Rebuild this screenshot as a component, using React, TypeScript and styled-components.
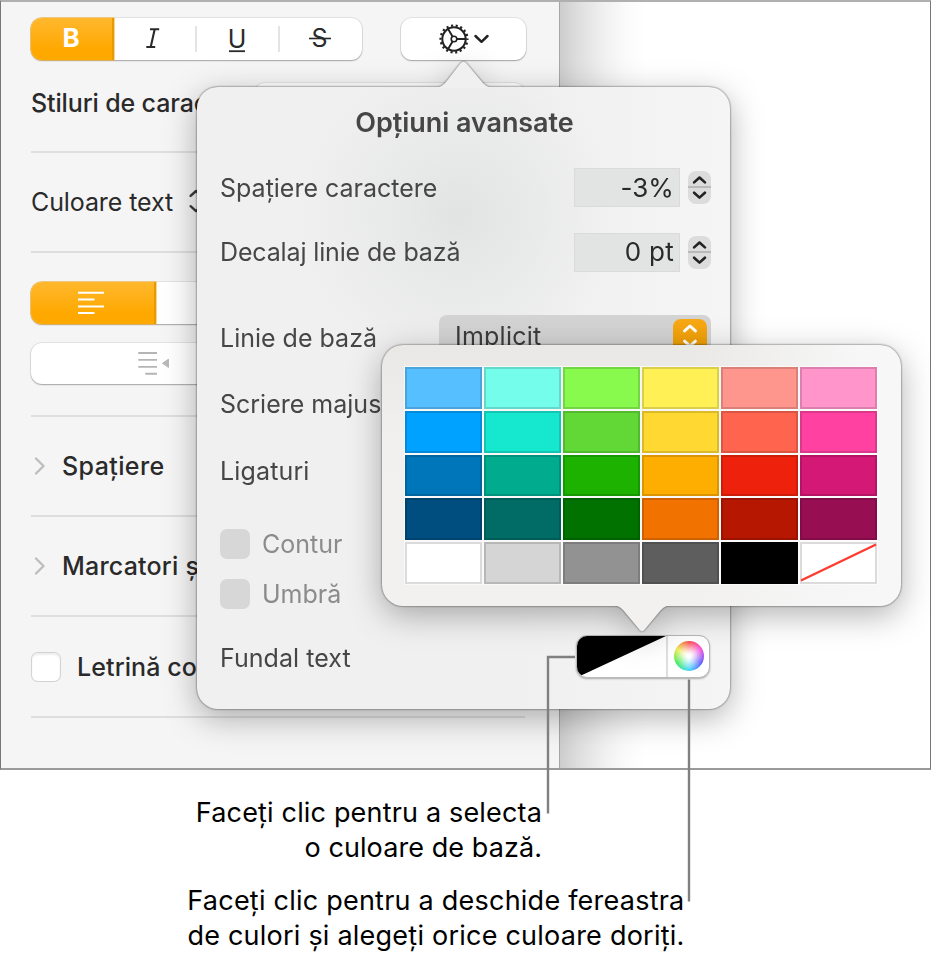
import React from 'react';
import styled, { createGlobalStyle, css } from 'styled-components';

const GlobalStyle = createGlobalStyle`
  * { box-sizing: border-box; }
  html, body { margin: 0; padding: 0; background: #fff; }
  body { width: 934px; height: 958px; overflow: hidden; font-family: Inter, "Noto Sans", sans-serif; }
  svg { display: block; flex: none; }
`;

const Page = styled.div`
  position: relative;
  width: 934px;
  height: 958px;
  background: #fff;
`;

const Window = styled.div`
  position: relative;
  display: flex;
  width: 931px;
  height: 770px;
  overflow: hidden;
  border: 1px solid #77777a;
  border-top: 2px solid #b0b0b0;
  border-bottom: 2px solid #9a9a9a;
`;

const Sidebar = styled.aside`
  display: flex;
  flex-direction: column;
  width: 558px;
  padding: 0 34px 0 30px;
  background: #f5f5f5;
`;

const DocumentArea = styled.main`
  flex: 1;
  border-left: 1px solid #a6a6a6;
  background: linear-gradient(90deg, #cdcdcd 0, #dedede 18px, #efefef 42px, #fafafa 64px, #fff 85px);
`;

const Section = styled.section<{ $height: number }>`
  display: flex;
  align-items: center;
  flex: none;
  height: ${p => p.$height}px;
  border-bottom: 2px solid #dedede;
`;

const StyleSection = styled.section`
  flex: none;
  height: 151px;
  padding-top: 16px;
  border-bottom: 2px solid #dedede;
`;

const AlignSection = styled(Section)`
  flex-direction: column;
  align-items: stretch;
  padding-top: 29px;
  gap: 19px;
`;

const ButtonRow = styled.div`
  display: flex;
  justify-content: space-between;
  height: 42px;
  margin-right: -1px;
`;

const raised = css`
  background: #fff;
  border-radius: 11px;
  box-shadow: 0 0 0 1px rgba(0, 0, 0, 0.07), 0 1px 1.5px rgba(0, 0, 0, 0.28);
`;

const Segmented = styled.div<{ $width: number }>`
  ${raised}
  display: flex;
  flex: none;
  align-items: center;
  width: ${p => p.$width}px;
  height: 42px;
`;

const Segment = styled.div<{ $width: number; $active?: boolean; $divided?: boolean }>`
  display: flex;
  align-items: center;
  justify-content: center;
  width: ${p => p.$width}px;
  height: ${p => (p.$active ? '100%' : '26px')};
  padding: 0 3px 2px 0;
  border-left: ${p => (p.$divided ? '2px solid #e4e4e4' : '0')};
  ${p => p.$active && css`
    border-radius: 11px 0 0 11px;
    border-right: 2px solid #e69a04;
    background: linear-gradient(#ffb82e, #ffa800 75%);
    box-shadow: 0 0 0 0.5px #fba91a;
  `}
`;

const RoundButton = styled.div`
  ${raised}
  display: flex;
  align-items: center;
  justify-content: center;
  gap: 5px;
  width: 125px;
  padding-left: 0;
`;

const IndentControl = styled.div`
  ${raised}
  flex: none;
  height: 41px;
  padding: 6.5px 0 0 107px;
`;

const CharacterStyle = styled.div`
  display: flex;
  justify-content: space-between;
  align-items: center;
  margin-top: 22px;
  height: 42px;
`;

const StyleMenu = styled.div`
  ${raised}
  width: 272px;
  height: 40px;
`;

type LabelProps = { $spacing?: number; $weight?: number; $size?: number; $color?: string };
const Label = styled.span<LabelProps>`
  font-size: ${p => p.$size ?? 25}px;
  font-weight: ${p => p.$weight ?? 400};
  letter-spacing: ${p => p.$spacing ?? 0}px;
  line-height: 32px;
  color: ${p => p.$color ?? '#2a2a2a'};
  white-space: nowrap;
`;

const Disclosure = styled.div`
  display: flex;
  width: 31px;
  padding-left: 3px;
`;

const SidebarCheckbox = styled.span`
  width: 28px;
  height: 28px;
  margin: 0 17px 0 1px;
  border-radius: 6px;
  background: #fff;
  box-shadow: 0 0 0 1px #d2d2d2, inset 0 2px 2px #eee;
`;

const popoverBase = css`
  position: absolute;
  border-radius: 21px;
  filter: drop-shadow(0 0 0.8px rgba(0, 0, 0, 0.65)) drop-shadow(0 9px 16px rgba(0, 0, 0, 0.3));
`;

const OptionsPopover = styled.div`
  ${popoverBase}
  left: 197px;
  top: 87px;
  width: 533px;
  height: 622px;
  padding: 0 19px 0 23px;
  background:
    radial-gradient(circle at 262px 128px, rgba(225, 226, 226, 0.95) 0, rgba(229, 230, 230, 0.75) 60px, rgba(240, 240, 240, 0) 160px),
    linear-gradient(90deg, #f0f0f0 60%, #f5f5f5);
`;

const PalettePopover = styled.div`
  ${popoverBase}
  left: 382px;
  top: 345px;
  width: 519px;
  height: 261px;
  padding: 22px 23px;
  background: linear-gradient(90deg, transparent 60%, #f7f7f7 92%), linear-gradient(#e9e8e5, #f1f0ef 35%, #f2f1f0);
`;

const ArrowUp = styled.svg`
  position: absolute;
  left: 237px;
  top: -26px;
`;

const ArrowDown = styled.svg`
  position: absolute;
  left: 230px;
  bottom: -26px;
`;

const Title = styled.h2`
  display: flex;
  justify-content: center;
  align-items: center;
  height: 72px;
  margin: 0 2px -4px 0;
  font: inherit;
`;

const OptionRow = styled.div<{ $height: number; $top?: number }>`
  display: flex;
  align-items: center;
  justify-content: space-between;
  height: ${p => p.$height}px;
  margin-top: ${p => p.$top ?? 0}px;
`;

const CheckRow = styled.div`
  display: flex;
  align-items: center;
  gap: 12px;
  height: 50px;
`;

const CheckGroup = styled.div`
  margin-top: 15px;
`;

const DisabledBox = styled.span`
  width: 30px;
  height: 30px;
  border-radius: 7px;
  background: #d7d7d7;
`;

const NumberControl = styled.div`
  display: flex;
  align-items: center;
  gap: 8px;
`;

const NumberField = styled.div`
  display: flex;
  align-items: center;
  justify-content: flex-end;
  width: 106px;
  height: 39px;
  padding-right: 5px;
  border: 1px solid #dadada;
  background: #e2e3e3;
`;

const StepperBox = styled.div`
  width: 23px;
  height: 33px;
  border-radius: 8px;
  background: linear-gradient(#dcdcdc 15px, #b9b9b9 15px, #b9b9b9 17px, #dcdcdc 17px);
`;

const SelectBox = styled.div`
  display: flex;
  align-items: center;
  justify-content: space-between;
  width: 272px;
  height: 42px;
  margin-bottom: 4px;
  padding: 0 4px 0 16px;
  border-radius: 8px;
  background: #d3d3d3;
`;

const SelectKnob = styled.span`
  display: flex;
  align-items: center;
  justify-content: center;
  width: 34px;
  height: 34px;
  border-radius: 8px;
  background: linear-gradient(#f9a916, #eb9b00);
`;

const ColorWell = styled.div`
  display: flex;
  overflow: hidden;
  width: 134px;
  height: 43px;
  margin: 0 1px 4px 0;
  border: 1px solid #b9b9b9;
  border-radius: 11px;
  background: #fff;
  box-shadow: 0 1px 2px rgba(0, 0, 0, 0.3);
`;

const WheelCell = styled.div`
  display: flex;
  align-items: center;
  justify-content: center;
  flex: 1;
  border-left: 2px solid #dedede;
`;

const Wheel = styled.span`
  width: 30px;
  height: 30px;
  border-radius: 50%;
  background:
    radial-gradient(circle, #fff 8%, rgba(255, 255, 255, 0.75) 28%, rgba(255, 255, 255, 0.1) 68%),
    conic-gradient(#ff3b3b, #f53cd8 60deg, #4a4cff 120deg, #29d3ff 180deg, #2fe84a 240deg, #e8ea35 300deg, #ff3b3b);
`;

const Swatches = styled.div`
  display: grid;
  grid-template-columns: repeat(6, 77px);
  grid-auto-rows: 41.75px;
  gap: 2px;
`;

const Swatch = styled.div<{ $color: string }>`
  background: ${p => p.$color};
  box-shadow: inset 0 0 0 2px rgba(0, 0, 0, 0.14), 0 0 0 1px rgba(255, 255, 255, 0.6);
`;

const Caption = styled.p<{ $right: number }>`
  width: ${p => p.$right}px;
  margin: 0;
  font-size: 27px;
  line-height: 35px;
  text-align: right;
  color: #000;
`;

const CaptionLine = styled.span<{ $spacing: number }>`
  display: block;
  letter-spacing: ${p => p.$spacing}px;
  white-space: nowrap;
`;

const Captions = styled.div`
  display: flex;
  flex-direction: column;
  gap: 18px;
  padding-top: 25px;
`;

const CalloutLines = styled.svg`
  position: absolute;
  left: 540px;
  top: 650px;
`;

const stroke = { fill: 'none', strokeLinecap: 'round' as const, strokeLinejoin: 'round' as const };

const GearIcon = () => (
  <svg width="30" height="32" viewBox="-15 -16 30 32">
    <circle r="13.5" fill="none" stroke="#222" strokeWidth="2.2" strokeDasharray="2.1 2.6124" strokeDashoffset="1.05" />
    <circle r="11.7" fill="none" stroke="#222" strokeWidth="2" />
    <circle r="2.8" fill="none" stroke="#222" strokeWidth="1.6" />
    <path d="M3.200 0H11.500M-1.600 -2.700L-5.900 -10M-1.600 2.700L-5.900 10" {...stroke} stroke="#222" strokeWidth="1.900" />
  </svg>
);

const ItalicIcon = () => (
  <svg width="16" height="22" viewBox="0 0 16 22">
    <path d="M5 2.2H14.2M1.3 20H10.2M9.7 2.2L5.7 20" {...stroke} strokeLinecap="butt" stroke="#2a2a2a" strokeWidth="2.1" />
  </svg>
);

const AlignIcon = () => (
  <svg width="28" height="24" viewBox="0 0 28 24">
    <path d="M1 2.7H27M1 9.4H17.5M1 16.4H27M1 23H17.5" stroke="#fff" strokeWidth="2" />
  </svg>
);

const OutdentIcon = () => (
  <svg width="32" height="26" viewBox="0 0 32 26">
    <path d="M0.3 3H19M0.3 9.9H19M0.3 16.9H19M7.3 23.8H19" stroke="#b5b5b5" strokeWidth="1.9" />
    <path d="M24.5 13.3L30.5 9.2V17.4Z" fill="#b9b9b9" stroke="#b9b9b9" strokeLinejoin="round" />
  </svg>
);

const ChevronDown = () => (
  <svg width="15" height="10" viewBox="0 0 15 10">
    <path d="M1.5 2L7.5 7.8L13.5 2" {...stroke} stroke="#222" strokeWidth="2.5" />
  </svg>
);

const ChevronRight = () => (
  <svg width="12" height="18" viewBox="0 0 12 18">
    <path d="M2 1.5L9.5 9L2 16.5" {...stroke} stroke="#bdbdbd" strokeWidth="2.3" />
  </svg>
);

const UpDown = ({ color, width, height, strokeWidth }: { color: string; width: number; height: number; strokeWidth: number }) => (
  <svg width={width} height={height} viewBox={`0 0 ${width} ${height}`}>
    <path
      d={`M${width / 2 - 5.4} ${height / 2 - 5.1}L${width / 2} ${height / 2 - 10}L${width / 2 + 5.4} ${height / 2 - 5.1}M${width / 2 - 5.4} ${height / 2 + 5.2}L${width / 2} ${height / 2 + 10.1}L${width / 2 + 5.4} ${height / 2 + 5.2}`}
      {...stroke}
      stroke={color}
      strokeWidth={strokeWidth}
    />
  </svg>
);

const PopupMark = styled.span`
  margin: -2px 0 0 15px;
`;

const StruckLetter = styled.span`
  display: grid;
  place-items: center;
  > * { grid-area: 1 / 1; }
`;

const Underlined = styled.span`
  display: grid;
  justify-items: center;
  margin: 2px 0 0 2px;
  svg { margin-top: -5px; }
`;

const BoldLetter = styled.span`
  display: flex;
  padding-left: 2px;
`;

const Stepper = () => (
  <StepperBox>
    <UpDown color="#222" width={23} height={33} strokeWidth={2.6} />
  </StepperBox>
);

const palette = [
  '#56BFFF', '#73FDEA', '#88FA4E', '#FFF056', '#FF968D', '#FF95CA',
  '#00A2FF', '#16E7CF', '#61D836', '#FFD932', '#FF644E', '#FF42A1',
  '#0076BA', '#00AB8E', '#1DB100', '#FEAE00', '#EE220C', '#D31876',
  '#004D80', '#006C65', '#017100', '#F27200', '#B51700', '#970E53',
  '#FFFFFF', '#D5D5D5', '#929292', '#5E5E5E', '#000000',
];

const optionColor = '#464646';

export default function App() {
  return (
    <Page>
      <GlobalStyle />
      <Window>
        <Sidebar>
          <StyleSection>
            <ButtonRow>
              <Segmented $width={331}>
                <Segment $width={83} $active>
                  <BoldLetter><Label $size={26} $weight={700} $color="#fff">B</Label></BoldLetter>
                </Segment>
                <Segment $width={81}><ItalicIcon /></Segment>
                <Segment $width={83} $divided>
                  <Underlined>
                    <Label $size={25}>U</Label>
                    <svg width="16" height="3"><path d="M0 1.2H16" stroke="#2a2a2a" strokeWidth="1.8" /></svg>
                  </Underlined>
                </Segment>
                <Segment $width={84} $divided>
                  <StruckLetter>
                    <Label $size={25}>S</Label>
                    <svg width="22" height="3"><path d="M0 1.5H22" stroke="#2a2a2a" strokeWidth="1.6" /></svg>
                  </StruckLetter>
                </Segment>
              </Segmented>
              <RoundButton><GearIcon /><ChevronDown /></RoundButton>
            </ButtonRow>
            <CharacterStyle>
              <Label $weight={500} $spacing={-0.13}>Stiluri de caractere</Label>
              <StyleMenu />
            </CharacterStyle>
          </StyleSection>
          <Section $height={100}>
            <Label $spacing={-0.1}>Culoare text</Label>
            <PopupMark><UpDown color="#3a3a3a" width={16} height={26} strokeWidth={2.4} /></PopupMark>
          </Section>
          <AlignSection $height={164}>
            <Segmented $width={494}>
              <Segment $width={125} $active><AlignIcon /></Segment>
              <Segment $width={123} />
            </Segmented>
            <IndentControl><OutdentIcon /></IndentControl>
          </AlignSection>
          <Section $height={100}>
            <Disclosure><ChevronRight /></Disclosure>
            <Label $weight={500} $spacing={0.4}>Spațiere</Label>
          </Section>
          <Section $height={100}>
            <Disclosure><ChevronRight /></Disclosure>
            <Label $weight={500} $spacing={0.2}>Marcatori și liste</Label>
          </Section>
          <Section $height={101}>
            <SidebarCheckbox />
            <Label $weight={500} $spacing={0.1}>Letrină co</Label>
          </Section>
        </Sidebar>
        <DocumentArea />
      </Window>

      <OptionsPopover>
        <ArrowUp width="60" height="27" viewBox="0 0 60 27">
          <path d="M0 27C8 26.5 10 23 14 18.500L25.500 3.500C28.500 -0.300 30.500 -0.300 33.500 3.500L46 18.500C50 23 52 26.500 60 27Z" fill="#f0f0f0" />
        </ArrowUp>
        <Title><Label $size={27} $weight={600} $spacing={-0.07} $color={optionColor}>Opțiuni avansate</Label></Title>
        <OptionRow $height={65}>
          <Label $color={optionColor}>Spațiere caractere</Label>
          <NumberControl>
            <NumberField><Label $size={26} $spacing={0.1}>-3%</Label></NumberField>
            <Stepper />
          </NumberControl>
        </OptionRow>
        <OptionRow $height={64}>
          <Label $color={optionColor} $spacing={-0.14}>Decalaj linie de bază</Label>
          <NumberControl>
            <NumberField><Label $size={26} $spacing={0.3}>0 pt</Label></NumberField>
            <Stepper />
          </NumberControl>
        </OptionRow>
        <OptionRow $height={67} $top={20}>
          <Label $color={optionColor}>Linie de bază</Label>
          <SelectBox>
            <Label $color="#3c3c3c" $spacing={0.23}>Implicit</Label>
            <SelectKnob><UpDown color="#fff" width={22} height={24} strokeWidth={3} /></SelectKnob>
          </SelectBox>
        </OptionRow>
        <OptionRow $height={66}>
          <Label $color={optionColor}>Scriere majuscule</Label>
        </OptionRow>
        <OptionRow $height={67}>
          <Label $color={optionColor} $spacing={0.15}>Ligaturi</Label>
        </OptionRow>
        <CheckGroup>
          <CheckRow><DisabledBox /><Label $color="#8b8b8b">Contur</Label></CheckRow>
          <CheckRow><DisabledBox /><Label $color="#8b8b8b">Umbră</Label></CheckRow>
        </CheckGroup>
        <OptionRow $height={60} $top={9}>
          <Label $color={optionColor} $spacing={0.05}>Fundal text</Label>
          <ColorWell>
            <svg width="89" height="42" viewBox="0 0 89 42"><path d="M0 0H89L3 40L0 41Z" fill="#000" /></svg>
            <WheelCell><Wheel /></WheelCell>
          </ColorWell>
        </OptionRow>
      </OptionsPopover>

      <PalettePopover>
        <ArrowDown width="60" height="27" viewBox="0 0 60 27">
          <path d="M0 0C8 0.500 10 4 14 8.500L26.500 23.500C29 27.200 31 27.200 33.500 23.500L46 8.500C50 4 52 0.500 60 0Z" fill="#f2f1f0" />
        </ArrowDown>
        <Swatches>
          {palette.map(color => <Swatch key={color} $color={color} />)}
          <Swatch $color="#fff">
            <svg width="77" height="42"><path d="M1 38.500L76 2.500" stroke="#ff3b30" strokeWidth="2.400" /></svg>
          </Swatch>
        </Swatches>
      </PalettePopover>

      <Captions>
        <Caption $right={542}>
          <CaptionLine $spacing={0.17}>Faceți clic pentru a selecta</CaptionLine>
          <CaptionLine $spacing={0.08}>o culoare de bază.</CaptionLine>
        </Caption>
        <Caption $right={684.5}>
          <CaptionLine $spacing={0.23}>Faceți clic pentru a deschide fereastra</CaptionLine>
          <CaptionLine $spacing={0.23}>de culori și alegeți orice culoare doriți.</CaptionLine>
        </Caption>
      </Captions>
      <CalloutLines width="160" height="260">
        <path d="M35 7H8V163.500M149 29.500V251.500" fill="none" stroke="#808080" strokeWidth="2.400" />
      </CalloutLines>
    </Page>
  );
}
